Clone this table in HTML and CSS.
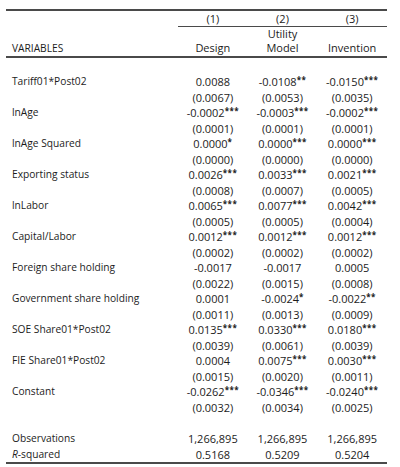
FILE: index.html
```html
<!DOCTYPE html>
<html>
<head>
<meta charset="utf-8">
<link rel="stylesheet" href="styles.css">
</head>
<body>
<table class="reg">
  <colgroup>
    <col class="c-label"><col class="c-num"><col class="c-num"><col class="c-num">
  </colgroup>
  <thead>
    <tr class="h-num">
      <th class="lab"></th><th class="rule">(1)</th><th class="rule">(2)</th><th class="rule">(3)</th>
    </tr>
    <tr class="h-name">
      <th class="lab">VARIABLES</th><th>Design</th><th>Utility<br>Model</th><th>Invention</th>
    </tr>
  </thead>
  <tbody>
    <tr class="gap"><td colspan="4"></td></tr>
    <tr><td class="lab">Tariff01*Post02</td><td>0.0088</td><td>-0.0108<sup>**</sup></td><td>-0.0150<sup>***</sup></td></tr>
    <tr><td class="lab"></td><td>(0.0067)</td><td>(0.0053)</td><td>(0.0035)</td></tr>
    <tr><td class="lab">lnAge</td><td>-0.0002<sup>***</sup></td><td>-0.0003<sup>***</sup></td><td>-0.0002<sup>***</sup></td></tr>
    <tr><td class="lab"></td><td>(0.0001)</td><td>(0.0001)</td><td>(0.0001)</td></tr>
    <tr><td class="lab">lnAge Squared</td><td>0.0000<sup>*</sup></td><td>0.0000<sup>***</sup></td><td>0.0000<sup>***</sup></td></tr>
    <tr><td class="lab"></td><td>(0.0000)</td><td>(0.0000)</td><td>(0.0000)</td></tr>
    <tr><td class="lab">Exporting status</td><td>0.0026<sup>***</sup></td><td>0.0033<sup>***</sup></td><td>0.0021<sup>***</sup></td></tr>
    <tr><td class="lab"></td><td>(0.0008)</td><td>(0.0007)</td><td>(0.0005)</td></tr>
    <tr><td class="lab">lnLabor</td><td>0.0065<sup>***</sup></td><td>0.0077<sup>***</sup></td><td>0.0042<sup>***</sup></td></tr>
    <tr><td class="lab"></td><td>(0.0005)</td><td>(0.0005)</td><td>(0.0004)</td></tr>
    <tr><td class="lab">Capital/Labor</td><td>0.0012<sup>***</sup></td><td>0.0012<sup>***</sup></td><td>0.0012<sup>***</sup></td></tr>
    <tr><td class="lab"></td><td>(0.0002)</td><td>(0.0002)</td><td>(0.0002)</td></tr>
    <tr><td class="lab">Foreign share holding</td><td>-0.0017</td><td>-0.0017</td><td>0.0005</td></tr>
    <tr><td class="lab"></td><td>(0.0022)</td><td>(0.0015)</td><td>(0.0008)</td></tr>
    <tr><td class="lab">Government share holding</td><td>0.0001</td><td>-0.0024<sup>*</sup></td><td>-0.0022<sup>**</sup></td></tr>
    <tr><td class="lab"></td><td>(0.0011)</td><td>(0.0013)</td><td>(0.0009)</td></tr>
    <tr><td class="lab">SOE Share01*Post02</td><td>0.0135<sup>***</sup></td><td>0.0330<sup>***</sup></td><td>0.0180<sup>***</sup></td></tr>
    <tr><td class="lab"></td><td>(0.0039)</td><td>(0.0061)</td><td>(0.0039)</td></tr>
    <tr><td class="lab">FIE Share01*Post02</td><td>0.0004</td><td>0.0075<sup>***</sup></td><td>0.0030<sup>***</sup></td></tr>
    <tr><td class="lab"></td><td>(0.0015)</td><td>(0.0020)</td><td>(0.0011)</td></tr>
    <tr><td class="lab">Constant</td><td>-0.0262<sup>***</sup></td><td>-0.0346<sup>***</sup></td><td>-0.0240<sup>***</sup></td></tr>
    <tr><td class="lab"></td><td>(0.0032)</td><td>(0.0034)</td><td>(0.0025)</td></tr>
    <tr class="gap"><td colspan="4"></td></tr>
    <tr><td class="lab">Observations</td><td>1,266,895</td><td>1,266,895</td><td>1,266,895</td></tr>
    <tr class="last"><td class="lab"><i>R</i>-squared</td><td>0.5168</td><td>0.5209</td><td>0.5204</td></tr>
  </tbody>
</table>
</body>
</html>
```

FILE: styles.css
```css
html, body {
  margin: 0;
  padding: 0;
  background: #ffffff;
}

body {
  padding: 9px 0 0 6px;
}

.reg {
  border-collapse: collapse;
  table-layout: fixed;
  width: 381px;
  color: #1c1c1c;
  font-family: "Open Sans", "Liberation Sans", sans-serif;
  font-size: 11px;
  border-top: 2px solid #4a4a4a;
  border-bottom: 2px solid #4a4a4a;
}

.c-label { width: 172px; }
.c-num { width: 69.67px; }

.reg th, .reg td {
  padding: 0;
  text-align: center;
  font-weight: normal;
  white-space: nowrap;
  line-height: 15.5px;
  height: 15.5px;
}

.reg .lab {
  text-align: left;
  padding-left: 6px;
  font-size: 10.2px;
}

.h-num th {
  height: 14px;
  line-height: 14px;
  padding-top: 1px;
}

.h-num th.rule {
  border-bottom: 1px solid #4a4a4a;
}

.h-name th {
  line-height: 14px;
  height: 28px;
  vertical-align: bottom;
  padding-bottom: 1px;
  border-bottom: 2px solid #4a4a4a;
}

.gap td {
  height: 16px;
}

.reg sup {
  font-size: 8px;
  font-weight: bold;
  line-height: 0;
  vertical-align: 3px;
  letter-spacing: 0.4px;
}
```
